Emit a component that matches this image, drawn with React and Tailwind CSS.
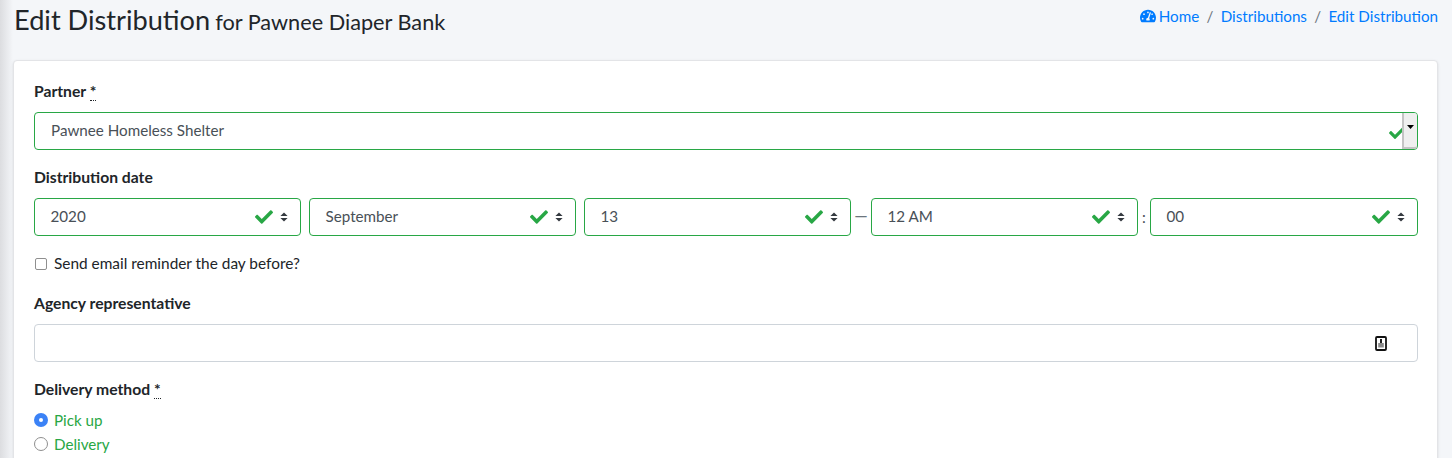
import React from "react";
import { FaCheck, FaTachometerAlt } from "react-icons/fa";

function Updown() {
  return (
    <svg width="8" height="10" viewBox="0 0 8 10" className="shrink-0">
      <path d="M4 0.5 L7.6 4 L0.4 4 Z M4 9.5 L7.6 6 L0.4 6 Z" fill="#343a40" />
    </svg>
  );
}

function DateSelect({ value, w }) {
  return (
    <div className={`${w} h-[38px] border border-[#28a745] rounded-[4px] bg-white flex items-center pl-[15.5px] pr-[12px] text-[#495057]`}>
      <span className="flex-1 pb-[2px]">{value}</span>
      <FaCheck className="text-[#28a745] w-[18px] h-[18px] mr-[7px]" />
      <Updown />
    </div>
  );
}

function Label({ children, req }) {
  return (
    <div className="font-bold text-[#212529] text-[15.7px] leading-[22px]">
      {children}
      {req && (
        <>
          {" "}
          <span className="border-b border-dotted border-[#212529] leading-none inline-block">*</span>
        </>
      )}
    </div>
  );
}

export default function App() {
  return (
    <div className="h-[458px] overflow-hidden bg-[#f4f6f9] flex font-['Lato','Noto_Sans',sans-serif] text-[15.2px]">
      <div className="w-[13px] shrink-0 bg-gradient-to-r from-[#dcdde0] to-[#f4f6f9]" />
      <div className="w-[1425px] shrink-0">
        <div className="h-[60px] flex justify-between pt-[2px]">
          <h1 className="text-[#212529] text-[27.2px] leading-[36px] font-normal pl-[1px]">
            Edit Distribution <span className="text-[21.7px] -ml-[2px]">for Pawnee Diaper Bank</span>
          </h1>
          <nav className="flex items-center h-[28px] text-[15.2px] text-[#007bff]">
            <FaTachometerAlt className="w-[16px] h-[16px] mr-[3px]" />
            <span>Home</span>
            <span className="text-[#6c757d] px-[7.3px]">/</span>
            <span>Distributions</span>
            <span className="text-[#6c757d] px-[7.3px]">/</span>
            <span>Edit Distribution</span>
          </nav>
        </div>
        <div className="bg-white rounded-[4px] border border-[#e3e4e7] shadow-sm pt-[19px] pl-[20px] pr-[19px] h-[420px]">
          <Label req>Partner</Label>
          <div className="mt-[10px] h-[38px] border border-[#28a745] rounded-[4px] flex items-center pl-[16px] text-[#495057]">
            <span className="flex-1 pb-[2px]">Pawnee Homeless Shelter</span>
            <FaCheck className="text-[#28a745] w-[16px] h-[16px] -mr-[3px] mt-[3px]" />
            <div className="relative w-[15px] h-[36px] bg-[#efefef] border-l-[2px] border-b-[2px] border-[#c4c4c4] flex items-center justify-center rounded-r-[3px]">
              <svg width="7" height="4" viewBox="0 0 7 4" className="mb-[6px]">
                <path d="M0 0 H7 L3.5 4 Z" fill="#000" />
              </svg>
            </div>
          </div>

          <div className="mt-[16px]">
            <Label>Distribution date</Label>
          </div>
          <div className="mt-[10px] flex items-center">
            <DateSelect value="2020" w="w-[267px]" />
            <div className="w-[8px]" />
            <DateSelect value="September" w="w-[267px]" />
            <div className="w-[8px]" />
            <DateSelect value="13" w="w-[267px]" />
            <span className="w-[20px] text-center text-[#6c757d] text-[17px] pb-[2px]">—</span>
            <DateSelect value="12 AM" w="w-[267px]" />
            <span className="w-[12px] text-center text-[#495057]">:</span>
            <DateSelect value="00" w="w-[268px]" />
          </div>

          <div className="mt-[17px] flex items-center h-[22px]">
            <span className="w-[12px] h-[12px] ml-[1px] border border-[#8f8f8f] rounded-[2px] bg-white" />
            <span className="ml-[7px] text-[#212529] text-[15.4px]">Send email reminder the day before?</span>
          </div>

          <div className="mt-[17px]">
            <Label>Agency representative</Label>
          </div>
          <div className="mt-[10px] h-[38px] border border-[#ced4da] rounded-[4px] flex items-center justify-end pr-[30px]">
            <svg width="12" height="15" viewBox="0 0 12 15">
              <rect x="1" y="1" width="10" height="13" rx="1" fill="#fff" stroke="#111" strokeWidth="1.8" />
              <rect x="5" y="3" width="2" height="4" fill="#222" />
              <rect x="3.2" y="7" width="5.6" height="4.5" fill="#8a8a8a" />
            </svg>
          </div>

          <div className="mt-[16px]">
            <Label req>Delivery method</Label>
          </div>
          <div className="mt-[8px] flex items-center h-[24px]">
            <span className="w-[14px] h-[14px] rounded-full bg-[#3b82f6] flex items-center justify-center">
              <span className="w-[4px] h-[4px] rounded-full bg-white" />
            </span>
            <span className="ml-[6px] text-[#28a745]">Pick up</span>
          </div>
          <div className="flex items-center h-[24px]">
            <span className="w-[14px] h-[14px] rounded-full border border-[#8f8f8f] bg-white" />
            <span className="ml-[6px] text-[#28a745]">Delivery</span>
          </div>
        </div>
      </div>
      <div className="flex-1" />
    </div>
  );
}
